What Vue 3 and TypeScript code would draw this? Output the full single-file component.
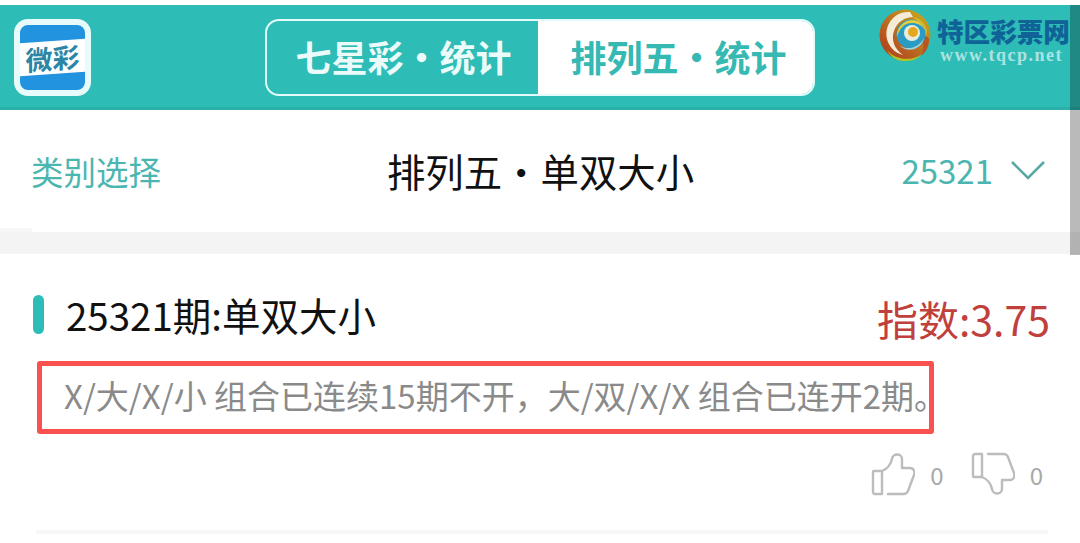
<script setup lang="ts">
const tabs = [
  { label: '七星彩・统计', active: false },
  { label: '排列五・统计', active: true },
]
const votes = [
  { kind: 'up', count: 0 },
  { kind: 'down', count: 0 },
]
</script>

<template>
  <div class="page">
    <header class="topbar">
      <div class="logo">
        <span class="logo__band">微彩</span>
      </div>
      <nav class="tabs">
        <span
          v-for="tab in tabs"
          :key="tab.label"
          class="tabs__item"
          :class="{ 'tabs__item--active': tab.active }"
        >{{ tab.label }}</span>
      </nav>
      <div class="mark">
        <svg class="mark__swirl" viewBox="0 0 52 52" width="52" height="52" aria-hidden="true">
          <defs>
            <linearGradient id="swirl-base" x1="0.85" y1="0.05" x2="0.15" y2="0.8">
              <stop offset="0" stop-color="#c7a51f" />
              <stop offset="0.45" stop-color="#bd7a22" />
              <stop offset="1" stop-color="#b3481e" />
            </linearGradient>
          </defs>
          <circle cx="26" cy="26" r="25.5" fill="url(#swirl-base)" />
          <path d="M50 30c0 8-3 13-8 17 3-6 3-14 0-20 4-1 6 0 8 3Z" fill="#b8561f" />
          <path d="M8 41c7 9 22 12 34 5-4 5-11 6-17 6-8 0-14-5-17-11Z" fill="#b6c41f" />
          <path d="M31 3C15 2 5 16 8 30c2 8 8 14 16 16-9-6-12-16-9-24 3-9 11-14 19-14Z" fill="#f4ecd6" />
          <path d="M34 8c7 1 13 7 14 14l-1 6c-2-8-7-16-13-20Z" fill="#d9b92a" />
          <circle cx="32" cy="25" r="14.5" fill="#2a9cc4" />
          <path d="M18 28c-1-8 6-17 15-17 6 0 11 4 13 10-3-5-8-7-13-7-8 0-13 6-15 14Z" fill="#e3cf3c" />
          <path d="M20 36c8 6 20 3 25-7-2 10-15 17-25 7Z" fill="#9fd3d8" />
          <circle cx="33" cy="24" r="8" fill="#e9ecdc" />
          <circle cx="34" cy="23" r="5" fill="#e6a71e" />
        </svg>
        <div class="mark__text">
          <span class="mark__name">特区彩票网</span>
          <span class="mark__url">www.tqcp.net</span>
        </div>
      </div>
    </header>

    <section class="subbar">
      <span class="subbar__link">类别选择</span>
      <h1 class="subbar__title">排列五・单双大小</h1>
      <span class="subbar__issue">
        25321
        <svg viewBox="0 0 36 20" width="36" height="20" aria-hidden="true">
          <path d="M2 2l16 16L34 2" fill="none" stroke="#5aa8a4" stroke-width="2.6" />
        </svg>
      </span>
    </section>

    <div class="gap" />

    <article class="card">
      <div class="card__head">
        <h2 class="card__title">25321期:单双大小</h2>
        <span class="card__score">指数:3.75</span>
      </div>
      <p class="card__desc">X/大/X/小 组合已连续15期不开，大/双/X/X 组合已连开2期。</p>
      <div class="votes">
        <span v-for="vote in votes" :key="vote.kind" class="votes__item">
          <svg
            class="votes__icon"
            :class="{ 'votes__icon--down': vote.kind === 'down' }"
            viewBox="0 0 44 44"
            width="44"
            height="44"
            aria-hidden="true"
          >
            <path
              d="M3 19h8v23H4a2 2 0 0 1-2-2V20a1 1 0 0 1 1-1ZM11 19c5-2 9-7 10-12 .5-6 10-6 10 0v9h8c4 0 5 4 4 7l-6 16c-1 2-2 3-4 3H17"
              fill="none"
              stroke="#bcbcbc"
              stroke-width="2.4"
              stroke-linejoin="round"
              stroke-linecap="round"
            />
          </svg>
          <span class="votes__count">{{ vote.count }}</span>
        </span>
      </div>
    </article>
    <div class="rule" />
    <div class="scrollbar" />
  </div>
</template>

<style>
html,
body {
  margin: 0;
  background: #fff;
}
</style>

<style scoped>
.page {
  position: relative;
  width: 1080px;
  height: 543px;
  overflow: hidden;
  padding-top: 5px;
  box-sizing: border-box;
  background: #fff;
  font-family: "Noto Sans CJK SC", "Noto Sans", sans-serif;
}

.topbar {
  position: relative;
  display: flex;
  align-items: center;
  gap: 174px;
  height: 105px;
  padding-left: 14px;
  box-sizing: border-box;
  background: #2dbcb6;
  box-shadow: inset 0 -3px 0 #2ab0a8;
}

.logo {
  width: 77px;
  height: 77px;
  flex: none;
  box-sizing: border-box;
  display: flex;
  align-items: center;
  border: 6px solid #e8fbfb;
  border-radius: 14px;
  background: #2293df;
}

.logo__band {
  flex: 1;
  height: 33px;
  background: #fff;
  color: #2b86a6;
  font-size: 27px;
  font-weight: 700;
  line-height: 33px;
  text-align: center;
  white-space: nowrap;
  transform: skewY(-4deg);
}

.tabs {
  display: flex;
  width: 550px;
  height: 77px;
  box-sizing: border-box;
  border: 2px solid #e4fbfb;
  border-radius: 14px;
  overflow: hidden;
}

.tabs__item {
  flex: 0 0 271px;
  box-sizing: border-box;
  display: flex;
  align-items: center;
  justify-content: center;
  padding: 0 0 4px 2px;
  color: #eafbfa;
  font-size: 36px;
  font-weight: 700;
  white-space: nowrap;
}

.tabs__item--active {
  flex-basis: 275px;
  padding-left: 6px;
  background: #fff;
  color: #36b9b3;
}

.mark {
  position: absolute;
  top: 4px;
  left: 879px;
  display: flex;
  gap: 6px;
}

.mark__swirl {
  flex: none;
}

.mark__text {
  display: flex;
  flex-direction: column;
  margin-top: 7px;
}

.mark__name {
  color: #0f6396;
  font-size: 26.6px;
  font-weight: 900;
  line-height: 30px;
  white-space: nowrap;
}

.mark__url {
  margin-left: 3px;
  color: rgba(255, 255, 255, 0.62);
  font-family: "Liberation Serif", serif;
  font-size: 18px;
  font-weight: 700;
  letter-spacing: 1.5px;
  line-height: 18px;
  white-space: nowrap;
}

.subbar {
  display: grid;
  grid-template-columns: 1fr auto 1fr;
  align-items: center;
  height: 122px;
  padding: 0 34px 2px 31px;
  box-sizing: border-box;
}

.subbar__link {
  color: #4bb5b0;
  font-size: 32.5px;
}

.subbar__title {
  margin: 0 0 0 4px;
  color: #111;
  font-size: 38.4px;
  font-weight: 400;
  white-space: nowrap;
}

.subbar__issue {
  display: flex;
  align-items: center;
  justify-self: end;
  gap: 17px;
  color: #4bb5b0;
  font-size: 33px;
}

.gap {
  position: relative;
  height: 22px;
  background: #f4f4f4;
}

.gap::before {
  content: "";
  position: absolute;
  left: 0;
  top: -4px;
  width: 32px;
  height: 4px;
  background: #f7f7f7;
}

.card {
  padding: 30px 30px 0 33px;
}

.card__head {
  display: flex;
  align-items: center;
  justify-content: space-between;
  height: 60px;
}

.card__title {
  position: relative;
  margin: 0;
  padding-left: 33px;
  color: #111;
  font-size: 38.5px;
  font-weight: 400;
}

.card__title::before {
  content: "";
  position: absolute;
  left: 0;
  top: 9px;
  width: 11px;
  height: 39px;
  border-radius: 6px;
  background: #2dbcb6;
}

.card__score {
  margin-top: 8px;
  color: #c0403c;
  font-size: 41px;
}

.card__desc {
  width: 897px;
  height: 73px;
  box-sizing: border-box;
  margin: 17px 0 0 4px;
  padding-left: 22px;
  border: 5px solid #fa5050;
  border-radius: 3px;
  color: #8a8a8a;
  font-size: 33px;
  line-height: 58px;
  white-space: nowrap;
}

.votes {
  display: flex;
  justify-content: flex-end;
  gap: 27px;
  margin: 18px 7px 0 0;
}

.votes__item {
  display: flex;
  align-items: center;
  gap: 15px;
}

.votes__icon--down {
  transform: scaleY(-1);
}

.votes__count {
  color: #a8a8a8;
  font-size: 24px;
}

.rule {
  position: absolute;
  left: 36px;
  right: 32px;
  top: 530px;
  height: 4px;
  background: #f7f7f7;
}

.scrollbar {
  position: absolute;
  top: 5px;
  right: 0;
  width: 10px;
  height: 250px;
  background: rgba(0, 0, 0, 0.27);
}
</style>
